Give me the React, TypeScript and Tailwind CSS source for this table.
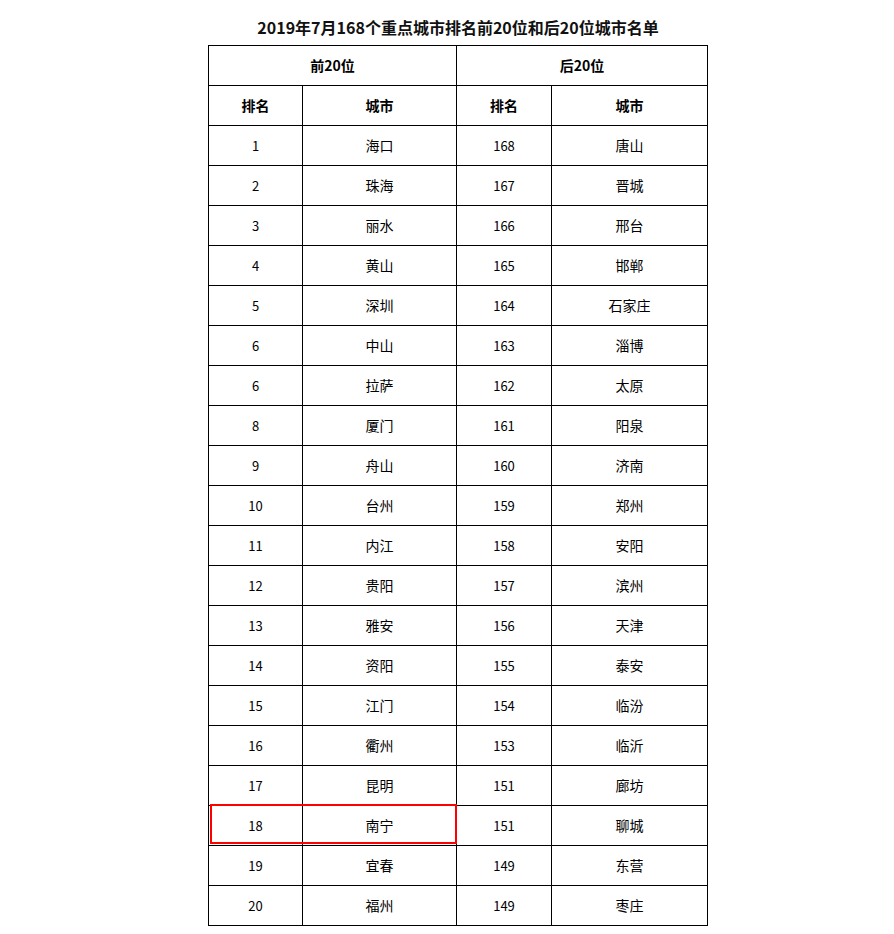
import React from "react";

const rows: [string, string, string, string][] = [
  ["1", "海口", "168", "唐山"],
  ["2", "珠海", "167", "晋城"],
  ["3", "丽水", "166", "邢台"],
  ["4", "黄山", "165", "邯郸"],
  ["5", "深圳", "164", "石家庄"],
  ["6", "中山", "163", "淄博"],
  ["6", "拉萨", "162", "太原"],
  ["8", "厦门", "161", "阳泉"],
  ["9", "舟山", "160", "济南"],
  ["10", "台州", "159", "郑州"],
  ["11", "内江", "158", "安阳"],
  ["12", "贵阳", "157", "滨州"],
  ["13", "雅安", "156", "天津"],
  ["14", "资阳", "155", "泰安"],
  ["15", "江门", "154", "临汾"],
  ["16", "衢州", "153", "临沂"],
  ["17", "昆明", "151", "廊坊"],
  ["18", "南宁", "151", "聊城"],
  ["19", "宜春", "149", "东营"],
  ["20", "福州", "149", "枣庄"],
];

const cell =
  "h-10 border-r border-b border-black flex items-center justify-center";

export default function App() {
  return (
    <div
      className="min-h-[934px] bg-white pl-[208px] pt-[15px] text-black"
      style={{ fontFamily: '"Noto Sans CJK SC", "Noto Sans", sans-serif' }}
    >
      <div className="w-[500px]">
        <div className="h-[24px] leading-[24px] text-center text-[16px] font-bold text-[#111] mb-[6px]">
          2019年7月168个重点城市排名前20位和后20位城市名单
        </div>
        <div className="relative">
          <div className="grid grid-cols-[94px_154px_95px_156px] border-l border-t border-black text-[14px]">
            <div className={`${cell} col-span-2 font-bold`}>前20位</div>
            <div className={`${cell} col-span-2 font-bold`}>后20位</div>
            <div className={`${cell} font-bold`}>排名</div>
            <div className={`${cell} font-bold`}>城市</div>
            <div className={`${cell} font-bold`}>排名</div>
            <div className={`${cell} font-bold`}>城市</div>
            {rows.map((r, i) => (
              <React.Fragment key={i}>
                <div className={`${cell} text-[13px]`}>{r[0]}</div>
                <div className={cell}>{r[1]}</div>
                <div className={`${cell} text-[13px]`}>{r[2]}</div>
                <div className={cell}>{r[3]}</div>
              </React.Fragment>
            ))}
          </div>
          <div className="absolute left-[2px] top-[759px] w-[247px] h-[40px] border-2 border-[#ff0000] pointer-events-none" />
        </div>
      </div>
    </div>
  );
}
